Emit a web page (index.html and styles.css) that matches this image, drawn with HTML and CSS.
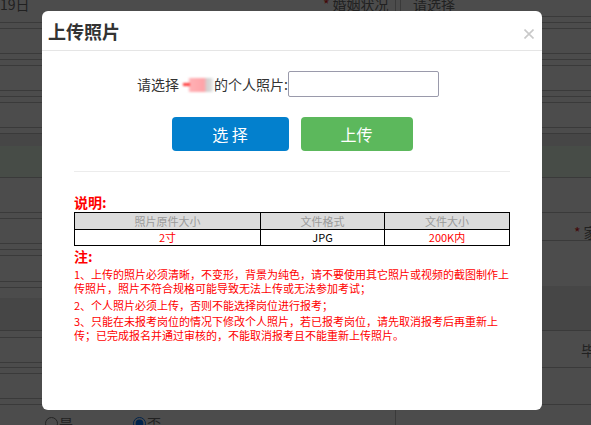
FILE: index.html
```html
<!DOCTYPE html>
<html lang="zh-CN">
<head>
<meta charset="utf-8">
<title>上传照片</title>
<link rel="stylesheet" href="styles.css">
</head>
<body>
<div class="page">
  <div class="form">
    <div class="col">
      <div class="seg h23"><div class="bg-text lift">19日</div></div>
      <div class="seg h6"></div>
      <div class="seg h25"></div>
      <div class="seg h6"></div>
      <div class="seg h6"></div>
      <div class="seg h25"></div>
      <div class="seg h6"></div>
      <div class="seg h6"></div>
      <div class="seg h25"></div>
      <div class="seg h6"></div>
      <div class="band dark h12"></div>
      <div class="seg green h32"></div>
      <div class="seg h35"></div>
      <div class="seg h6"></div>
      <div class="seg h25"></div>
      <div class="seg h6"></div>
      <div class="seg h6"></div>
      <div class="seg h26"></div>
      <div class="seg h6"></div>
      <div class="band h10"></div>
      <div class="seg dark h33"></div>
      <div class="seg h7"></div>
      <div class="seg h25"></div>
      <div class="seg h5"></div>
      <div class="seg h6"></div>
      <div class="seg h25"></div>
      <div class="seg h6"></div>
      <div class="band h21 radios">
        <label class="radio"><input type="radio" name="yn">是</label>
        <label class="radio second"><input type="radio" name="yn" checked>否</label>
      </div>
    </div>
    <div class="col">
      <div class="seg h17 top-right">
        <div class="lbl"><div class="bg-text lift"><span class="star">*</span>婚姻状况</div></div>
        <div class="sel"><div class="bg-text lift">请选择</div></div>
      </div>
      <div class="seg h6"></div>
      <div class="seg h6"></div>
      <div class="seg h25"></div>
      <div class="seg h6"></div>
      <div class="seg h6"></div>
      <div class="seg h25"></div>
      <div class="seg h6"></div>
      <div class="seg h6"></div>
      <div class="seg h25"></div>
      <div class="seg h6"></div>
      <div class="band dark h12"></div>
      <div class="seg green h32"></div>
      <div class="seg h35"></div>
      <div class="seg h28 right-label"><div class="bg-text"><span class="star">*</span>家</div></div>
      <div class="band h45"></div>
      <div class="seg dark h45"></div>
      <div class="seg h37 right-label far"><div class="bg-text">毕</div></div>
      <div class="seg h37"></div>
      <div class="band h21"><div class="cell-line"></div></div>
    </div>
  </div>

  <div class="overlay"></div>

  <div class="modal">
    <div class="modal-header">
      <h2 class="modal-title">上传照片</h2>
      <span class="close">
        <svg width="10" height="10" viewBox="0 0 10 10"><path d="M0.5 0.5 L9.5 9.5 M9.5 0.5 L0.5 9.5" stroke="#c9c9c9" stroke-width="1.6" fill="none"/></svg>
      </span>
    </div>
    <div class="modal-body">
      <div class="pick-row">
        <span class="pick-label">请选择 <span class="name"><span class="name-mark"></span></span>的个人照片:</span>
        <input class="file-input" type="text">
      </div>
      <div class="btn-row">
        <button class="btn btn-select">选 择</button>
        <button class="btn btn-upload">上传</button>
      </div>
      <div class="divider"></div>
      <div class="notes">
        <div class="notes-title">说明:</div>
        <table class="spec">
          <tr class="spec-head"><td class="c1">照片原件大小</td><td class="c2">文件格式</td><td class="c3">文件大小</td></tr>
          <tr class="spec-body"><td class="red">2寸</td><td>JPG</td><td class="red">200K内</td></tr>
        </table>
        <div class="notes-title zhu">注:</div>
        <p class="note">1、上传的照片必须清晰，不变形，背景为纯色，请不要使用其它照片或视频的截图制作上传照片，照片不符合规格可能导致无法上传或无法参加考试；</p>
        <p class="note">2、个人照片必须上传，否则不能选择岗位进行报考；</p>
        <p class="note">3、只能在未报考岗位的情况下修改个人照片，若已报考岗位，请先取消报考后再重新上传；已完成报名并通过审核的，不能取消报考且不能重新上传照片。</p>
      </div>
    </div>
  </div>
</div>
</body>
</html>
```

FILE: styles.css
```css
html, body {
  margin: 0;
  padding: 0;
}
body {
  font-family: "Noto Sans CJK SC", "Noto Sans", sans-serif;
  background: #fff;
}
.page {
  position: relative;
  width: 591px;
  height: 425px;
  overflow: hidden;
  background: #fff;
}
.form {
  display: grid;
  grid-template-columns: 295px 296px;
}
.col {
  display: flex;
  flex-direction: column;
}
.seg {
  box-sizing: border-box;
  border-bottom: 1px solid #c2c2c2;
}
.band { box-sizing: border-box; }
.dark { background: #ececec; }
.green { background: #edfded; }

.h5 { height: 5px; }
.h6 { height: 6px; }
.h7 { height: 7px; }
.h10 { height: 10px; }
.h12 { height: 12px; }
.h17 { height: 17px; }
.h21 { height: 21px; }
.h23 { height: 23px; }
.h25 { height: 25px; }
.h26 { height: 26px; }
.h28 { height: 28px; }
.h32 { height: 32px; }
.h33 { height: 33px; }
.h35 { height: 35px; }
.h37 { height: 37px; }
.h45 { height: 45px; }

.bg-text {
  font-size: 14px;
  line-height: 14px;
  color: #6e6e6e;
  white-space: nowrap;
}
.lift { margin-top: -3px; }
.star {
  color: #e02020;
  margin-right: 3px;
}
.top-right {
  display: flex;
  align-items: flex-start;
}
.lbl {
  box-sizing: border-box;
  width: 101px;
  height: 12px;
  padding-left: 28px;
  border-right: 1px solid #c2c2c2;
}
.sel {
  box-sizing: border-box;
  margin-left: 4px;
  height: 12px;
  padding-left: 12px;
  border-left: 1px solid #c2c2c2;
  flex: 1;
}
.right-label {
  padding: 12px 0 0 279px;
}
.right-label.far {
  padding-left: 286px;
}
.radios {
  display: flex;
  padding: 11px 0 0 45px;
  align-items: flex-start;
}
.radio {
  display: flex;
  align-items: center;
  font-size: 14px;
  line-height: 14px;
  color: #6e6e6e;
}
.radio input {
  margin: 0 1px 0 0;
  width: 13px;
  height: 13px;
}
.radio.second {
  margin-left: 60px;
}
.cell-line {
  width: 101px;
  height: 100%;
  box-sizing: border-box;
  border-right: 1px solid #c2c2c2;
}

.overlay {
  position: absolute;
  inset: 0;
  background: rgba(0, 0, 0, 0.7);
}

.modal {
  position: absolute;
  left: 42px;
  top: 11px;
  width: 500px;
  height: 399px;
  background: #fff;
  border-radius: 6px;
  color: #333;
}
.modal-header {
  box-sizing: border-box;
  height: 40px;
  border-bottom: 1px solid #e5e5e5;
  display: flex;
  align-items: center;
  justify-content: space-between;
  padding: 1px 8px 0 6px;
}
.modal-title {
  margin: 0;
  font-size: 18px;
  line-height: 20px;
  font-weight: bold;
  color: #333;
}
.close {
  display: flex;
  margin-top: 5px;
}
.modal-body {
  padding: 0 32px;
}
.pick-row {
  margin-top: 20px;
  height: 26px;
  display: flex;
  align-items: center;
  justify-content: center;
  padding-right: 8px;
}
.pick-label {
  font-size: 14px;
  line-height: 16px;
  color: #333;
  white-space: nowrap;
}
.name {
  display: inline-block;
  position: relative;
  width: 32px;
  height: 14px;
  vertical-align: -2px;
  background: linear-gradient(to right, transparent 0 6px, #ffb0b4 8px, #ffa3a8 22px, #d2d2d2 25px, #dadada 29px, transparent 32px);
  filter: blur(1.2px);
}
.name-mark {
  position: absolute;
  left: 1px;
  top: 5px;
  width: 7px;
  height: 3px;
  background: #ff4040;
}
.file-input {
  box-sizing: border-box;
  width: 151px;
  height: 26px;
  margin: 0;
  padding: 0 4px;
  border: 1px solid #9a9aab;
  border-radius: 2px;
  background: #fff;
}
.btn-row {
  margin-top: 20px;
  display: flex;
  justify-content: center;
  gap: 12px;
}
.btn {
  height: 34px;
  border: 0;
  border-radius: 4px;
  color: #fff;
  font-family: "Noto Sans CJK SC", "Noto Sans", sans-serif;
  font-size: 16px;
  line-height: 34px;
  padding: 0;
}
.btn-select {
  width: 117px;
  background: #0380cd;
}
.btn-upload {
  width: 112px;
  background: #5cb85c;
}
.divider {
  margin-top: 20px;
  border-top: 1px solid #ececec;
}
.notes {
  margin-right: -2px;
  color: #f00;
}
.notes-title {
  margin-top: 20px;
  font-size: 14px;
  line-height: 20px;
  font-weight: bold;
  color: #f00;
}
.notes-title.zhu {
  margin-top: 0;
  line-height: 21px;
}
.spec {
  width: 436px;
  border-collapse: collapse;
  border: 1px solid #000;
  font-size: 11px;
  text-align: center;
}
.spec td {
  border: 1px solid #000;
  padding: 0;
  color: #000;
}
.spec-head td {
  background: #dcdcdc;
  color: #9a9a9a;
  height: 16px;
  line-height: 16px;
}
.spec-body td {
  height: 15px;
  line-height: 15px;
}
.spec .c1 { width: 185px; }
.spec .c2 { width: 123px; }
.spec td.red { color: #f00; }
.note {
  margin: 0 0 2.5px 0;
  font-size: 11px;
  line-height: 14px;
  color: #f00;
}
```
